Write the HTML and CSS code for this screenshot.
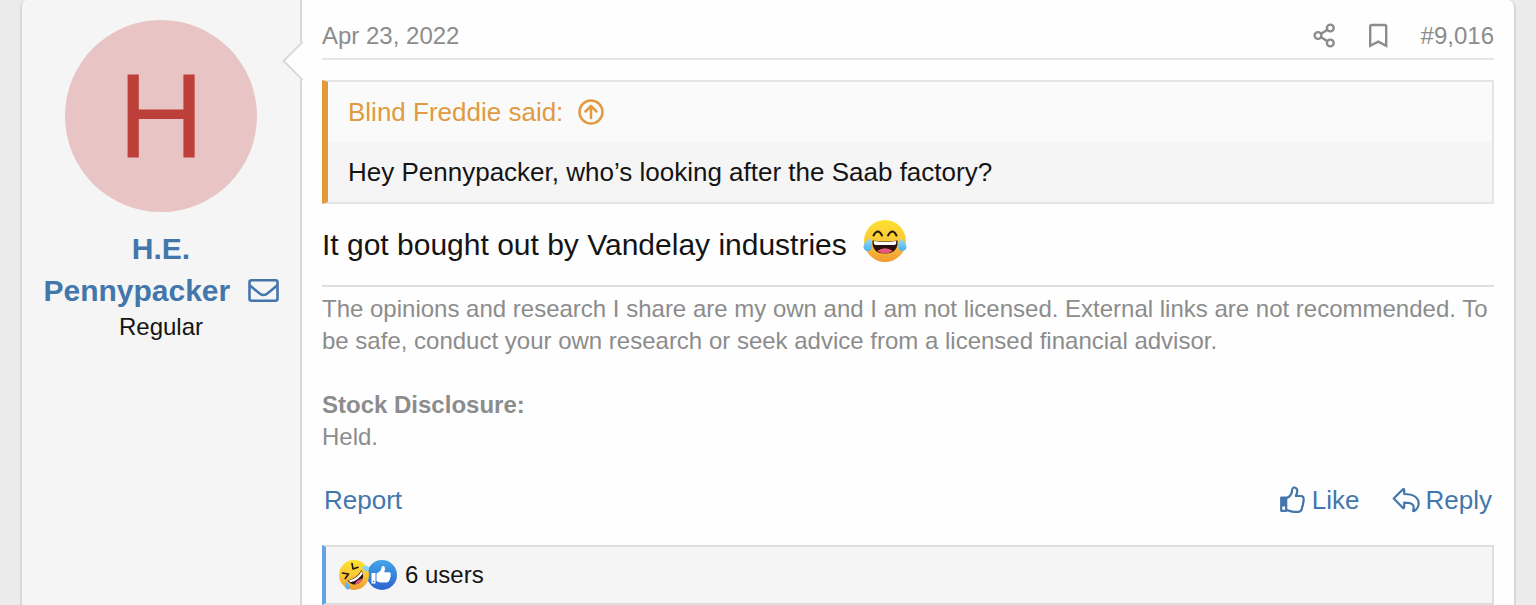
FILE: index.html
```html
<!DOCTYPE html>
<html lang="en">
<head>
<meta charset="utf-8">
<meta name="viewport" content="width=device-width, initial-scale=1">
<title>Forum post</title>
<link rel="stylesheet" href="styles.css">
</head>
<body>
<article class="post">
  <aside class="user">
    <a class="avatar" href="#">H</a>
    <div class="user-name">
      <a href="#">H.E. Pennypacker</a>
      <button class="mail" type="button" aria-label="Message">
        <svg width="32" height="24" viewBox="0 0 32 24" fill="none" stroke="currentColor" stroke-width="2.600" stroke-linejoin="round"><rect x="2.500" y="1.300" width="28" height="20.400" rx="2"/><path d="M3 6.500C7 10 10 12.500 13 14.700Q16.500 17.300 20 14.700C23 12.500 26 10 30 6.500" stroke-width="2.400"/></svg>
      </button>
    </div>
    <div class="user-title">Regular</div>
  </aside>
  <div class="main">
    <header class="post-head">
      <a class="date" href="#"><time datetime="2022-04-23">Apr 23, 2022</time></a>
      <div class="head-actions">
        <button type="button" aria-label="Share">
          <svg width="24" height="26" viewBox="0 0 24 26" fill="none" stroke="currentColor" stroke-width="2.400"><circle cx="5" cy="12.500" r="3.400"/><circle cx="17.300" cy="5" r="3.400"/><circle cx="17.300" cy="20" r="3.400"/><path d="M8 10.700l6.300-3.800M8 14.300l6.300 3.800"/></svg>
        </button>
        <button type="button" aria-label="Bookmark">
          <svg width="20" height="26" viewBox="0 0 20 26" fill="none" stroke="currentColor" stroke-width="2.400"><path d="M1.200 22.800V3.600q0-1.600 1.600-1.600h12.800q1.600 0 1.600 1.600v19.200L9.200 18.600z"/></svg>
        </button>
        <a href="#">#9,016</a>
      </div>
    </header>
    <blockquote class="quote">
      <a class="quote-head" href="#">Blind Freddie said:
        <svg width="28" height="28" viewBox="0 0 28 28" fill="none" stroke="currentColor" stroke-width="2.500" stroke-linecap="round" stroke-linejoin="round"><circle cx="14" cy="14" r="11.500"/><path d="M14 20V8M8.500 13.500L14 8l5.500 5.500"/></svg>
      </a>
      <div class="quote-text">Hey Pennypacker, who’s looking after the Saab factory?</div>
    </blockquote>
    <p class="message">It got bought out by Vandelay industries
      <svg class="laugh" width="44" height="44" viewBox="0 0 44 44" role="img" aria-label="Laughing with tears">
        <defs>
          <linearGradient id="face" x1="0" y1="0" x2="0" y2="1"><stop offset="0" stop-color="#fde030"/><stop offset=".5" stop-color="#fbc936"/><stop offset="1" stop-color="#f19a34"/></linearGradient>
          <linearGradient id="tear" x1="0" y1="0" x2="0" y2="1"><stop offset="0" stop-color="#94daf7"/><stop offset="1" stop-color="#4db1ed"/></linearGradient>
        </defs>
        <circle cx="22" cy="21" r="21" fill="url(#face)"/>
        <path d="M10.500 15.500q4.500-8 8.500 0M25 15.500q4.500-8 8.500 0" fill="none" stroke="#241709" stroke-width="2" stroke-linecap="round" stroke-linejoin="round"/>
        <path d="M9.500 20.500Q22 22.500 34.500 20.500Q35.500 33.500 22 33.500Q8.500 33.500 9.500 20.500Z" fill="#28120f"/>
        <path d="M11 21Q22 23 33 21Q34 25 31 25H13Q10 25 11 21Z" fill="#fff"/>
        <path d="M14 31Q22 25.500 30 31Q26 33.400 22 33.400Q18 33.400 14 31Z" fill="#e8597c"/>
        <path d="M7.500 18.500C2.500 21 .5 24 .5 27a4.200 4.200 0 0 0 8.200 1Q9 24 7.500 18.500ZM36.500 18.500C41.500 21 43.500 24 43.500 27a4.200 4.200 0 0 1-8.200 1Q35 24 36.500 18.500Z" fill="url(#tear)"/>
      </svg>
    </p>
    <div class="signature">
      <p>The opinions and research I share are my own and I am not licensed. External links are not recommended. To be safe, conduct your own research or seek advice from a licensed financial advisor.</p>
      <p class="disclosure"><strong>Stock Disclosure:</strong><br>Held.</p>
    </div>
    <footer class="actions">
      <a href="#">Report</a>
      <div class="action-group">
        <button type="button">
          <svg width="26" height="28" viewBox="0 0 26 28" fill="none" stroke="currentColor" stroke-width="2.200" stroke-linejoin="round"><path d="M6.500 12C9 11 11.500 8.500 11.800 6C12 3.500 12.500 1.500 14 1.500C18 1.500 18 6 15.800 10H21Q23.700 10.200 23.600 12.800Q23.900 15 23.100 16.800Q23.300 19 22.100 20.800Q22 25.600 18.500 25.800H13.500Q10.500 25.400 6.500 24"/><path d="M1.200 11.700H6.200V24.800H1.200z"/><path fill="currentColor" stroke="none" d="M1 11.500h5.500v9H1z"/></svg>Like</button>
        <button type="button">
          <svg width="28" height="26" viewBox="0 0 28 26" fill="none" stroke="currentColor" stroke-width="2.200" stroke-linejoin="round"><path d="M1.700 11.500L11 2.200Q12.200 1.500 12.200 3V7C20 7.100 26.700 9 26.700 17Q26.500 21 22.200 24Q20.600 24.500 21.300 22.500C23 17 19.500 15.800 12.200 15.700V20Q12.100 21.700 10.800 20.800Z"/></svg>Reply</button>
      </div>
    </footer>
    <div class="reactions">
      <span class="reaction-icons">
        <svg class="rofl" width="32" height="32" viewBox="0 0 32 32" role="img" aria-label="Haha">
          <circle cx="16" cy="16" r="15" fill="url(#face)"/>
          <path d="M4.500 14l6 1-3.200 4.500M14 4.500l1 5.500 5-1.700" fill="none" stroke="#241709" stroke-width="1.600" stroke-linecap="round" stroke-linejoin="round"/>
          <path d="M9.500 21.500Q19 19.500 23.500 11Q27.500 18 22 23.500Q15 28.500 9.500 21.500Z" fill="#28120f"/>
          <path d="M10.500 21.500Q20 19.500 23.500 12L24.700 14.500Q21 21 12.500 23.300Z" fill="#fff"/>
          <path d="M17 25Q18.500 20.500 24.500 19.500Q24 22 21.500 24Q19 25.500 17 25Z" fill="#e8597c"/>
          <path d="M8 23Q13 26.500 12 29Q10 32 7.500 29Q6 26.500 8 23ZM24 8Q30 4.500 31 9Q31 13 27.500 12Q25 11.500 24 8Z" fill="url(#tear)"/>
        </svg>
        <svg class="thumb" width="32" height="32" viewBox="0 0 32 32" role="img" aria-label="Like">
          <defs><linearGradient id="blue" x1="0" y1="0" x2="0" y2="1"><stop offset="0" stop-color="#42a5e8"/><stop offset="1" stop-color="#2c64cf"/></linearGradient></defs>
          <circle cx="16" cy="16" r="15" fill="url(#blue)"/>
          <path d="M10.500 14.500C14 13 15.500 10.500 15.700 8Q17 6 18.700 8Q19.700 10 18.200 13.300H23Q25.500 13.700 24.500 16Q25.500 17.500 24 18.800Q24.700 20.500 23 21.500Q23 23.500 20.500 23.500H15Q12.500 23.300 10.500 22Z" fill="#fff"/>
          <path d="M5.500 14H9.500V24.500H5.500z" fill="#fff"/><circle cx="7.500" cy="22.500" r=".8" fill="#2c6fd3"/>
        </svg>
      </span>
      <a href="#">6 users</a>
    </div>
  </div>
</article>
</body>
</html>
```

FILE: styles.css
```css
* { box-sizing: border-box; }

body {
  margin: 0;
  background: #ebebeb;
  color: #141414;
  font-family: "Liberation Sans", Arial, sans-serif;
  font-size: 26px;
}

a { color: inherit; text-decoration: none; }
p { margin: 0; }
svg { display: block; flex: none; }

button {
  padding: 0;
  border: 0;
  background: none;
  color: inherit;
  font: inherit;
  cursor: pointer;
}

.post {
  display: flex;
  min-height: 100vh;
  margin: 0 20px;
  border: solid #d8d8d8;
  border-width: 0 2px;
  border-radius: 8px 8px 0 0;
  background: #fefefe;
}

.user {
  flex: none;
  width: 280px;
  padding: 20px 18px;
  border-right: 2px solid #d8d8d8;
  border-radius: 6px 0 0 0;
  background: #f5f5f5;
  text-align: center;
}

.avatar {
  display: flex;
  align-items: center;
  justify-content: center;
  width: 192px;
  height: 192px;
  margin: 0 auto 16px;
  border-radius: 50%;
  background: #e8c4c4;
  color: #bc4039;
  font-size: 120px;
  line-height: 1;
}

.user-name {
  color: #4377ab;
  font-size: 30px;
  font-weight: bold;
  line-height: 42px;
}

.user-name a { margin-right: 8px; }
.mail { display: inline-block; vertical-align: -2px; }
.user-title { font-size: 24px; line-height: 30px; }

.main {
  position: relative;
  flex: 1;
  min-width: 0;
  padding: 0 20px;
}

/* Speech arrow pointing at the author column */
.main::before {
  content: "";
  position: absolute;
  top: 47px;
  left: -14px;
  width: 26px;
  height: 26px;
  border: solid #d8d8d8;
  border-width: 0 0 2px 2px;
  background: #fefefe;
  transform: rotate(45deg);
}

.post-head {
  position: relative;
  display: flex;
  justify-content: space-between;
  padding: 20px 0 6px;
  border-bottom: 2px solid #e5e5e5;
  color: #8c8c8c;
  font-size: 24px;
  line-height: 32px;
}

.head-actions { display: flex; align-items: center; gap: 32px; }

.quote {
  margin: 20px 0 16px;
  border: 2px solid #e5e5e5;
  border-left: 6px solid #e39a3b;
  background: #f5f5f5;
  line-height: 60px;
}

.quote-head {
  display: flex;
  align-items: center;
  gap: 14px;
  padding: 0 20px;
  background: #fafafa;
  color: #e09a41;
}

.quote-text { padding: 0 20px; }

.message {
  display: flex;
  align-items: flex-end;
  gap: 16px;
  font-size: 30px;
  line-height: 38px;
}

.signature {
  margin-top: 21px;
  padding-top: 6px;
  border-top: 2px solid #dedede;
  color: #8c8c8c;
  font-size: 24px;
  line-height: 32px;
}

.disclosure { margin-top: 32px; }

.actions {
  display: flex;
  justify-content: space-between;
  padding: 32px 2px 30px;
  color: #4377ab;
  line-height: 30px;
}

.action-group { display: flex; gap: 32px; }

.action-group button {
  display: flex;
  align-items: center;
  gap: 6px;
}

.reactions {
  display: flex;
  align-items: center;
  gap: 7px;
  height: 60px;
  padding-left: 12px;
  border: 2px solid #dedede;
  border-left: 4px solid #63a3e3;
  background: #f5f5f5;
  font-size: 24px;
}

.reaction-icons { display: flex; }
.rofl { position: relative; z-index: 1; }
.thumb { margin-left: -4px; }
```
